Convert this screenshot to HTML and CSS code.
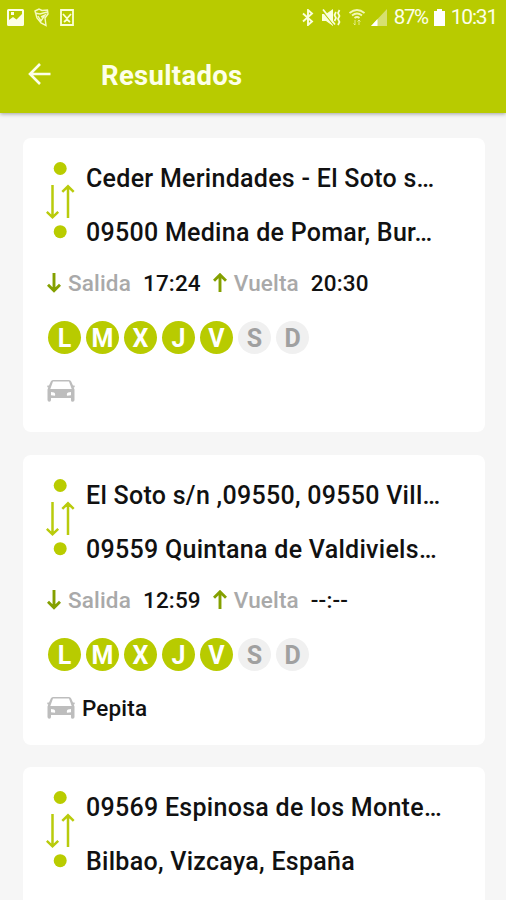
FILE: index.html
```html
<!DOCTYPE html>
<html lang="es">
<head>
    <meta charset="UTF-8">
    <meta name="viewport" content="width=device-width, initial-scale=1.0">
    <title>Resultados</title>
    <link rel="stylesheet" href="styles.css">
</head>
<body>
    <!-- Shared icons -->
    <svg class="defs" width="0" height="0">
        <symbol id="route" viewBox="0 0 30 78">
            <g fill="#b9cc00">
                <circle cx="14.2" cy="6.5" r="6.500"/>
                <circle cx="14.2" cy="69.700" r="6.500"/>
            </g>
            <path d="M6.500 23v32M.8 49.800l5.700 5.500 5.700-5.500M22 56V24.300M16.300 29.800l5.700-5.500 5.700 5.500" fill="none" stroke="#b9cb0c" stroke-width="2.500"/>
        </symbol>
        <symbol id="down" viewBox="0 0 14 20">
            <path d="M7 0v18M1 11.700l6 6 6-6" fill="none" stroke="#84a000" stroke-width="2.900"/>
        </symbol>
        <symbol id="up" viewBox="0 0 14 20">
            <path d="M7 19V1.500M1 7.800l6-6 6 6" fill="none" stroke="#84a000" stroke-width="2.900"/>
        </symbol>
        <symbol id="car" viewBox="0 0 28 22">
            <path fill="#bdbdbd" fill-rule="evenodd" d="M6 0h16q1.600 0 2.200 1.500L26 5.500h1.500q.8 1.500-.8 2l.8 2V20q0 1.700-1.800 1.700T24 20v-2H4v2q0 1.700-1.700 1.700T.5 20V9.500l.8-2q-1.600-.5-.8-2H2l1.800-4Q4.400 0 6 0zM6 1.500L3.300 9h21.400L22 1.500zM4 12v3.300l4 .4q.6-2.700-1-3.200zM24 12v3.300l-4 .4q-.6-2.700 1-3.200z"/>
        </symbol>
    </svg>

    <header>
        <div class="status">
            <svg width="17" height="17" viewBox="0 0 17 17">
                <path fill="#fdffe6" fill-rule="evenodd" d="M1.500 0h14Q17 0 17 1.500v14q0 1.500-1.500 1.500h-14Q0 17 0 15.500v-14Q0 0 1.500 0zM2 2v9l4-3 3.500 2.500L15 5V2zM4 3h3v3H4z"/>
            </svg>
            <svg class="tag" width="15" height="19" viewBox="0 0 15 19" fill="none" stroke="#f5fac0" stroke-width="1.400">
                <path d="M1 3l4-2 3 1.500L13.500 2l.5 4-3 4 1 7.500-5-2.500-4-5zM1 5l5 1 7-2M4 8l3 5 4-6-4 2"/>
            </svg>
            <svg class="task" width="14" height="17" viewBox="0 0 14 17" fill="none" stroke="#fbffd6" stroke-width="1.800">
                <path d="M1 1h12v15H1zM3 5l4 4.500L11 5M4 13l3-2.500 3 2.500"/>
            </svg>

            <div class="status-right">
                <svg width="12" height="17" viewBox="0 0 12 17" fill="none" stroke="#fbffdc" stroke-width="1.900">
                    <path d="M1 4.500l9 8-4 3.500V1l4 3.500-9 8"/>
                </svg>
                <svg class="mute" width="19" height="17" viewBox="0 0 19 17">
                    <path fill="#fbffdc" d="M0 5h4l7-5v17l-7-5H0z"/>
                    <path d="M0 1.500l12 15" stroke="#b8cb00" stroke-width="1.200"/>
                    <path d="M1 .5l12 15M14 3l-1.500 3L14 9l-1.500 3M17.500 1L16 4l1.500 3-1.500 3 1.500 3-1.500 3" fill="none" stroke="#fbffdc" stroke-width="1.700"/>
                </svg>
                <svg class="wifi" width="16" height="17" viewBox="0 0 16 17" fill="none" stroke="#f2f7b5" stroke-width="1.800">
                    <path d="M.5 4q7.500-6 15 0M3 6.500q5-4 10 0M5.500 9q2.500-2 5 0"/>
                    <path d="M6 11v5M4.500 14.500L6 16M10 16v-5M8.500 12.500L10 11l1.500 1.500" stroke-width="1" opacity=".75"/>
                </svg>
                <svg class="signal" width="16" height="17" viewBox="0 0 16 17">
                    <path d="M16 0v17H0z" fill="#d6e070"/>
                    <path d="M6.500 10v7H0z" fill="#fff"/>
                </svg>
                <span class="percent">87%</span>
                <svg class="battery" width="11" height="17" viewBox="0 0 11 17">
                    <path d="M3 0h5v2h3v15H0V2h3z" fill="#fff"/>
                </svg>
                <span class="clock">10:31</span>
            </div>
        </div>
        <div class="toolbar">
            <svg width="23" height="22" viewBox="0 0 23 22" fill="none" stroke="#fdffe8" stroke-width="2.600">
                <path d="M22.500 11H2M12 1L2 11l10 10"/>
            </svg>
            <h1>Resultados</h1>
        </div>
    </header>

    <main>
        <div class="card">
            <div class="route">
                <svg width="30" height="78"><use href="#route"/></svg>
                <div class="places">
                    <p>Ceder Merindades - El Soto s…</p>
                    <p>09500 Medina de Pomar, Bur…</p>
                </div>
            </div>
            <div class="times">
                <svg width="14" height="20"><use href="#down"/></svg>
                <span class="label">Salida</span>
                <span class="time">17:24</span>
                <svg width="14" height="20"><use href="#up"/></svg>
                <span class="label">Vuelta</span>
                <span class="time">20:30</span>
            </div>
            <div class="days">
                <span class="on">L</span>
                <span class="on">M</span>
                <span class="on">X</span>
                <span class="on">J</span>
                <span class="on">V</span>
                <span>S</span>
                <span>D</span>
            </div>
            <div class="driver">
                <svg width="28" height="22"><use href="#car"/></svg>
            </div>
        </div>

        <div class="card named">
            <div class="route">
                <svg width="30" height="78"><use href="#route"/></svg>
                <div class="places">
                    <p>El Soto s/n ,09550, 09550 Vill…</p>
                    <p>09559 Quintana de Valdiviels…</p>
                </div>
            </div>
            <div class="times">
                <svg width="14" height="20"><use href="#down"/></svg>
                <span class="label">Salida</span>
                <span class="time">12:59</span>
                <svg width="14" height="20"><use href="#up"/></svg>
                <span class="label">Vuelta</span>
                <span class="time">--:--</span>
            </div>
            <div class="days">
                <span class="on">L</span>
                <span class="on">M</span>
                <span class="on">X</span>
                <span class="on">J</span>
                <span class="on">V</span>
                <span>S</span>
                <span>D</span>
            </div>
            <div class="driver">
                <svg width="28" height="22"><use href="#car"/></svg>
                <span>Pepita</span>
            </div>
        </div>

        <div class="card last">
            <div class="route">
                <svg width="30" height="78"><use href="#route"/></svg>
                <div class="places">
                    <p>09569 Espinosa de los Monte…</p>
                    <p>Bilbao, Vizcaya, España</p>
                </div>
            </div>
        </div>
    </main>
</body>
</html>
```

FILE: styles.css
```css
* {
    box-sizing: border-box;
}
body {
    margin: 0;
    background-color: #f6f6f6;
    font-family: Roboto, sans-serif;
    color: #111;
}
svg {
    display: block;
    flex: none;
}
.defs {
    display: none;
}
header {
    height: 113px;
    background-color: #b8cb00;
    box-shadow: 0 1px 4px rgba(0,0,0,0.35);
}
.status {
    display: flex;
    align-items: center;
    height: 34px;
    padding: 0 9px 0 7px;
    color: #fdffe8;
    font-size: 21px;
}
.tag {
    margin-left: 10px;
}
.task {
    margin-left: 11px;
}
.status-right {
    display: flex;
    align-items: center;
    margin-left: auto;
}
.mute {
    margin-left: 8px;
}
.wifi {
    margin-left: 8px;
}
.signal {
    margin-left: 6px;
}
.percent {
    margin-left: 7px;
    font-size: 20.5px;
    letter-spacing: -1.4px;
}
.battery {
    margin: 0 6px 0 6px;
}
.clock {
    letter-spacing: -1.2px;
}
.toolbar {
    display: flex;
    align-items: center;
    height: 79px;
    padding: 0 0 0 28px;
}
h1 {
    margin: 4px 0 0 50px;
    font-size: 27.5px;
    font-weight: 700;
    letter-spacing: 0.3px;
    color: #fdffe8;
}
main {
    padding: 25px 21px 0 23px;
}
.card {
    height: 294px;
    margin-bottom: 23px;
    padding: 24px 24px 0;
    background-color: #fff;
    border-radius: 8px;
}
.card.named {
    height: 290px;
    margin-bottom: 22px;
}
.card.last {
    height: 133px;
    margin-bottom: 0;
    border-radius: 8px 8px 0 0;
}
.route {
    display: flex;
    height: 106px;
    margin-left: -1px;
}
.places {
    margin: -10px 0 0 10px;
}
.places p {
    margin: 0;
    height: 53.5px;
    line-height: 53px;
    font-size: 25px;
    font-weight: 500;
    letter-spacing: 0.28px;
    white-space: nowrap;
}
.last .route {
    height: 97px;
}
.times {
    display: flex;
    align-items: center;
    height: 29px;
    font-size: 22.5px;
    font-weight: 500;
    letter-spacing: 0.15px;
}
.label {
    margin-left: 7px;
    color: #a9a9a9;
}
.time {
    margin: 0 12px;
}
.days {
    display: flex;
    gap: 5px;
    margin: 24px 0 0 1px;
}
.days span {
    width: 33px;
    height: 33px;
    border-radius: 50%;
    background-color: #f0f0f0;
    color: #a0a0a0;
    font-size: 25px;
    font-weight: 700;
    line-height: 36px;
    text-align: center;
}
.days .on {
    background-color: #b8cb00;
    color: #fff;
}
.driver {
    display: flex;
    align-items: center;
    gap: 7px;
    height: 30px;
    margin-top: 22px;
    font-size: 22.5px;
    font-weight: 500;
    letter-spacing: 0.15px;
}
```
